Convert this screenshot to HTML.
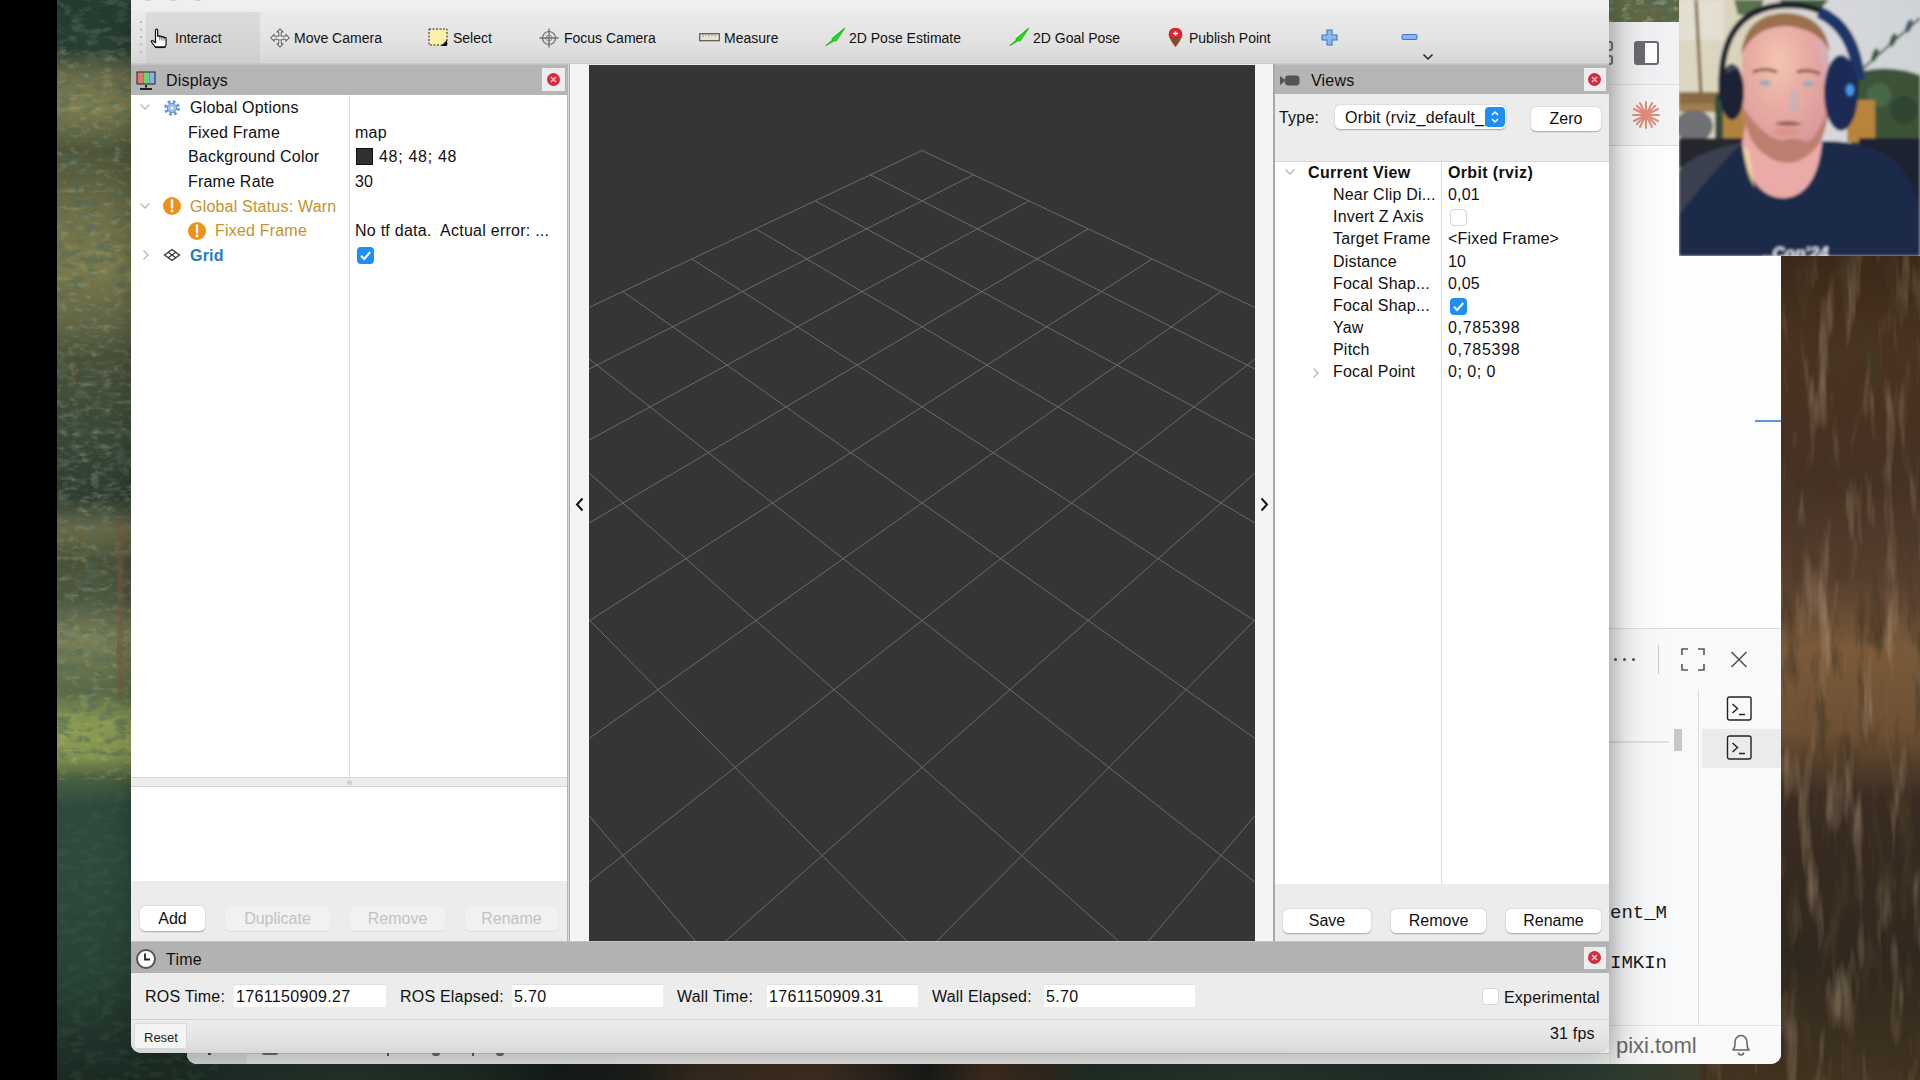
<!DOCTYPE html>
<html><head><meta charset="utf-8">
<style>
*{box-sizing:border-box}
html,body{margin:0;padding:0}
body{width:1920px;height:1080px;overflow:hidden;position:relative;background:#000;font-family:"Liberation Sans",sans-serif;color:#111}
.a{position:absolute}
.t{position:absolute;white-space:pre;line-height:1}
.f16{font-size:16px;letter-spacing:0.2px}
.f14{font-size:14px}
.btn{position:absolute;background:#fff;border-radius:5px;box-shadow:0 0.5px 1.5px rgba(0,0,0,.3);font-size:16px;text-align:center;color:#111}
.btn.dis{background:#f1f1f1;color:#c2c2c2;box-shadow:0 0.5px 1px rgba(0,0,0,.08)}
.hdr{position:absolute;background:#b5b5b5}
.cb{position:absolute;width:17px;height:17px;border-radius:4px;background:#1f8ff5}
.cbo{position:absolute;width:17px;height:17px;border-radius:4px;background:#fff;border:1px solid #d6d6d6}
.tf{position:absolute;background:#fff;border-top:1px solid #e0e0e0;font-size:16px;padding-left:1px;letter-spacing:.35px}
</style></head>
<body>
<!-- desktop background -->
<div id="forestL" class="a" style="left:57px;top:0;width:160px;height:1080px;overflow:hidden">
<svg width="160" height="1080" style="position:absolute;left:0;top:0">
<defs>
<linearGradient id="fg" x1="0" y1="0" x2="0" y2="1">
<stop offset="0" stop-color="#223a30"/><stop offset=".045" stop-color="#2a3e32"/><stop offset=".07" stop-color="#6a6c48"/><stop offset=".1" stop-color="#7e7e50"/><stop offset=".14" stop-color="#4e5438"/><stop offset=".2" stop-color="#707048"/><stop offset=".25" stop-color="#7a7a4c"/><stop offset=".3" stop-color="#626444"/><stop offset=".33" stop-color="#4a5038"/><stop offset=".4" stop-color="#3a4836"/><stop offset=".46" stop-color="#2e3c32"/><stop offset=".49" stop-color="#6a6a48"/><stop offset=".52" stop-color="#4a5038"/><stop offset=".555" stop-color="#4e5840"/><stop offset=".59" stop-color="#7a8058"/><stop offset=".64" stop-color="#5a6a44"/><stop offset=".67" stop-color="#8a9a52"/><stop offset=".7" stop-color="#86964e"/><stop offset=".72" stop-color="#4a6040"/><stop offset=".745" stop-color="#2e4a3c"/><stop offset=".8" stop-color="#2e4a3c"/><stop offset=".9" stop-color="#284236"/><stop offset=".97" stop-color="#1e3028"/><stop offset="1" stop-color="#1a2a22"/>
</linearGradient>
<filter id="fn" x="0" y="0" width="100%" height="100%"><feTurbulence type="fractalNoise" baseFrequency="0.07 0.14" numOctaves="3" seed="7"/><feColorMatrix type="matrix" values="0 0 0 0 0.08  0 0 0 0 0.14  0 0 0 0 0.1  0 0 0 -4 2.1"/></filter><filter id="fl" x="0" y="0" width="100%" height="100%"><feTurbulence type="fractalNoise" baseFrequency="0.09 0.16" numOctaves="3" seed="21"/><feColorMatrix type="matrix" values="0 0 0 0 0.55  0 0 0 0 0.56  0 0 0 0 0.34  0 0 0 3 -1.6"/></filter>
</defs>
<rect width="160" height="1080" fill="url(#fg)"/>
<rect width="160" height="760" filter="url(#fn)" opacity=".55"/><rect y="50" width="160" height="730" filter="url(#fl)" opacity=".3"/><rect y="790" width="160" height="290" filter="url(#fn)" opacity=".2"/>
<rect x="60" y="520" width="6" height="180" fill="#7a5a40" opacity=".55"/>
</svg>
</div>
<div id="forestB" class="a" style="left:217px;top:1052px;width:1703px;height:28px;background:linear-gradient(90deg,#1c2c24 0,#223028 140px,#1c2820 260px,#141a18 340px,#1a1c18 420px,#33281e 480px,#3c2c20 600px,#2a221c 660px,#161a16 710px,#3a2a1e 770px,#30261c 820px,#1e2c24 870px,#24322a 1040px,#1e2a24 1240px,#2a3a30 1390px,#3a3a2a 1480px,#6a4a30 1540px,#5a3e28 1703px)"></div>
<div id="bark" class="a" style="left:1700px;top:250px;width:220px;height:830px;overflow:hidden">
<svg width="220" height="830" style="position:absolute;left:0;top:0">
<defs>
<linearGradient id="bg1" x1="0" y1="0" x2="0" y2="1">
<stop offset="0" stop-color="#3a2818"/><stop offset=".12" stop-color="#4a3220"/><stop offset=".28" stop-color="#463022"/><stop offset=".4" stop-color="#584030"/><stop offset=".48" stop-color="#7a5a3a"/><stop offset=".58" stop-color="#6e5034"/><stop offset=".66" stop-color="#3a2c22"/><stop offset=".85" stop-color="#30281e"/><stop offset="1" stop-color="#40321f"/>
</linearGradient>
<filter id="bn" x="0" y="0" width="100%" height="100%"><feTurbulence type="fractalNoise" baseFrequency="0.07 0.015" numOctaves="4" seed="11"/><feColorMatrix type="matrix" values="0 0 0 0 0.06  0 0 0 0 0.04  0 0 0 0 0.02  0 0 0 -3.2 1.6"/></filter><filter id="bl2" x="0" y="0" width="100%" height="100%"><feTurbulence type="fractalNoise" baseFrequency="0.06 0.01" numOctaves="3" seed="5"/><feColorMatrix type="matrix" values="0 0 0 0 0.62  0 0 0 0 0.45  0 0 0 0 0.3  0 0 0 3.5 -1.9"/></filter>
</defs>
<rect width="220" height="830" fill="url(#bg1)"/>
<rect width="220" height="830" filter="url(#bn)" opacity=".8"/><rect width="220" height="830" filter="url(#bl2)" opacity=".35"/>
</svg>
</div>
<div id="forestTR" class="a" style="left:1600px;top:0;width:90px;height:40px;overflow:hidden"><svg width="90" height="40" style="position:absolute;left:0;top:0"><rect width="90" height="40" fill="#5e6644"/><rect width="90" height="40" filter="url(#fn)" opacity=".7"/><rect width="90" height="40" filter="url(#fl)" opacity=".5"/></svg></div>

<!-- webcam -->
<div id="cam" class="a" style="z-index:20;left:1679px;top:0;width:241px;height:256px;overflow:hidden;background:#d8d4c8">
<svg width="241" height="256" viewBox="0 0 241 256" style="position:absolute;left:0;top:0">
<defs><filter id="bl" x="-20%" y="-20%" width="140%" height="140%"><feGaussianBlur stdDeviation="1.4"/></filter>
<linearGradient id="wall" x1="0" y1="0" x2="1" y2="0"><stop offset="0" stop-color="#dcd8c4"/><stop offset=".3" stop-color="#d8d2bc"/><stop offset=".65" stop-color="#d6d8dc"/><stop offset="1" stop-color="#cfd3d6"/></linearGradient>
<radialGradient id="face" cx=".42" cy=".28" r=".7"><stop offset="0" stop-color="#f2c6b0"/><stop offset=".45" stop-color="#e8aca4"/><stop offset="1" stop-color="#d8989a"/></radialGradient>
</defs>
<g filter="url(#bl)">
<rect width="241" height="256" fill="url(#wall)"/>
<rect x="0" y="0" width="45" height="40" fill="#e8e6dc" opacity=".6"/>
<path d="M17 0 L22 95" stroke="#7a5a34" stroke-width="3"/>
<path d="M55 0h30l-6 15h-20z" fill="#5a7050"/>
<path d="M100 0h50l-8 8h-36z" fill="#3e5a3e"/>
<path d="M180 72 L241 18" stroke="#3a4a38" stroke-width="2"/>
<ellipse cx="196" cy="55" rx="3" ry="7" fill="#3a5a3a" transform="rotate(20 196 55)"/>
<ellipse cx="214" cy="40" rx="3" ry="7" fill="#3a5a3a" transform="rotate(20 214 40)"/>
<ellipse cx="230" cy="26" rx="3" ry="7" fill="#3a5a6a" transform="rotate(20 230 26)"/>
<rect x="0" y="92" width="46" height="14" fill="#8a6a40"/>
<rect x="0" y="104" width="44" height="8" fill="#a08050"/>
<ellipse cx="15" cy="126" rx="19" ry="16" fill="#707074"/>
<rect x="36" y="95" width="9" height="45" fill="#2e5038"/>
<rect x="44" y="105" width="32" height="36" fill="#b08440"/>
<rect x="0" y="138" width="70" height="30" fill="#26282e"/>
<path d="M170 75 Q205 62 241 75 L241 150 L172 150z" fill="#3c5238"/>
<circle cx="200" cy="95" r="12" fill="#4a6848"/><circle cx="225" cy="110" r="14" fill="#2e4432"/>
<rect x="168" y="100" width="28" height="42" fill="#b8843a"/>
<rect x="180" y="138" width="61" height="75" fill="#1c2232"/>
<!-- shirt -->
<path d="M0 170 Q20 150 63 143 Q70 196 104 198 Q138 196 143 141 Q185 140 215 160 Q235 180 241 210 L241 256 L0 256z" fill="#1e2a48"/>
<path d="M0 170 Q20 150 63 143 Q45 160 20 190 L0 215z" fill="#3a3f50"/>
<!-- neck -->
<path d="M68 118 L142 118 L143 141 Q138 196 104 198 Q70 196 63 143z" fill="#eaaaa8"/>
<path d="M64 145 Q66 175 76 188 L70 150z" fill="#f0e0a0" opacity=".7"/>
<!-- headphone band -->
<path d="M43 100 Q36 6 110 5 Q182 6 176 95" fill="none" stroke="#1a1e2a" stroke-width="6"/>
<path d="M140 12 Q176 28 180 80" fill="none" stroke="#1e3468" stroke-width="12"/>
<!-- face -->
<path d="M63 62 Q63 24 106 24 Q150 24 150 62 L150 105 Q148 138 132 152 Q118 162 108 162 Q96 162 84 152 Q66 138 64 105z" fill="url(#face)"/>
<path d="M62 55 Q66 14 106 13 Q146 14 151 52 Q140 28 106 26 Q75 27 62 55z" fill="#9c7050"/>
<path d="M65 108 Q66 140 84 153 Q96 163 108 163 Q120 163 132 153 Q148 140 149 108 Q140 136 128 142 Q116 136 104 140 Q86 140 65 108z" fill="#b87c6c" opacity=".9"/>
<path d="M95 124 Q108 118 124 124 Q110 128 95 124z" fill="#9a6050"/>
<ellipse cx="108" cy="132" rx="14" ry="4" fill="#d89088" opacity=".8"/>
<ellipse cx="86" cy="83" rx="6" ry="3" fill="#9aacb4"/>
<ellipse cx="129" cy="84" rx="6" ry="3" fill="#9aacb4"/>
<path d="M74 72 Q86 67 98 72M118 72 Q129 68 141 74" fill="none" stroke="#8a5a48" stroke-width="3"/>
<path d="M114 90 L115 111" stroke="#a8b8d8" stroke-width="6" opacity=".55"/>
<path d="M138 40 Q150 60 150 100" stroke="#c8c8e8" stroke-width="8" opacity=".3" fill="none"/>
<!-- ear cups -->
<ellipse cx="53" cy="92" rx="12" ry="28" fill="#1e2434"/>
<ellipse cx="162" cy="93" rx="17" ry="38" fill="#1a2a56"/>
<ellipse cx="171" cy="90" rx="4" ry="6" fill="#4a98e8"/>
<path d="M48 72 Q52 66 60 68" stroke="#5a6070" stroke-width="2" fill="none"/>
<text x="84" y="259" font-family="Liberation Sans" font-size="17" font-weight="700" fill="#e4e8f4" font-style="italic">..Con'24</text>
</g>
</svg>
</div>

<!-- VS Code window behind -->
<div id="vsc" class="a" style="left:187px;top:22px;width:1594px;height:1042px;border-radius:10px;overflow:hidden;background:#f8f8f9">
<div class="a" style="left:-187px;top:-22px;width:1920px;height:1080px">
<div class="a" style="left:187px;top:22px;width:1594px;height:63px;background:#f2f2f4;border-bottom:1px solid #dcdcde"></div>
<div class="a" style="left:187px;top:86px;width:1594px;height:60px;background:#f4f4f6;border-bottom:1px solid #dcdcde"></div>
<div class="a" style="left:187px;top:146px;width:1594px;height:482px;background:#fefefe"></div>
<div class="a" style="left:187px;top:628px;width:1594px;height:397px;background:#f8f9fb;border-top:1px solid #dedee0"></div>
<div class="a" style="left:187px;top:1025px;width:1594px;height:39px;background:#fafafa;border-top:1px solid #e2e2e4"></div>
<!-- icons -->
<div class="a" style="left:1605px;top:41px;width:8px;height:10px;border:2px solid #777;border-left:none;border-radius:0 3px 3px 0"></div>
<div class="a" style="left:1605px;top:55px;width:8px;height:10px;border:2px solid #777;border-left:none;border-radius:0 3px 3px 0"></div>
<div class="a" style="left:1634px;top:41px;width:25px;height:24px;border:2px solid #6a6a70;border-radius:3px;background:linear-gradient(90deg,#6a6a70 45%,#fff 45%)"></div>
<svg class="a" style="left:1630px;top:99px" width="32" height="32" viewBox="0 0 32 32"><g stroke="#e08e7c" stroke-width="2" stroke-linecap="round"><path d="M16 3v26M3 16h26M6.8 6.8l18.4 18.4M25.2 6.8L6.8 25.2M10 4l12 24M22 4L10 28M4 10l24 12M4 22l24-12"/></g></svg>
<div class="a" style="left:1755px;top:420px;width:26px;height:2px;background:#5a98e0"></div>
<!-- panel toolbar -->
<div class="a" style="left:1614px;top:658px;width:3px;height:3px;border-radius:50%;background:#555;box-shadow:9px 0 #555,18px 0 #555"></div>
<div class="a" style="left:1658px;top:645px;width:1px;height:29px;background:#c8c8c8"></div>
<svg class="a" style="left:1681px;top:648px" width="24" height="23" viewBox="0 0 24 23"><path d="M1 7V1h6M17 1h6v6M23 16v6h-6M7 22H1v-6" fill="none" stroke="#555" stroke-width="1.6"/></svg>
<svg class="a" style="left:1730px;top:651px" width="18" height="17" viewBox="0 0 18 17"><path d="M1.5 1l15 15M16.5 1l-15 15" stroke="#555" stroke-width="1.6"/></svg>
<div class="a" style="left:1698px;top:690px;width:1px;height:335px;background:#dcdcde"></div>
<div class="a" style="left:1702px;top:729px;width:79px;height:39px;background:#ebebed"></div>
<svg class="a" style="left:1726px;top:696px" width="27" height="26" viewBox="0 0 27 26"><rect x="1.5" y="1" width="23.5" height="23" rx="2" fill="none" stroke="#222" stroke-width="1.4"/><path d="M6.5 8l5 4.5-5 4.5M13 18.5h6" fill="none" stroke="#222" stroke-width="1.4"/></svg>
<svg class="a" style="left:1726px;top:735px" width="27" height="26" viewBox="0 0 27 26"><rect x="1.5" y="1" width="23.5" height="23" rx="2" fill="none" stroke="#222" stroke-width="1.4"/><path d="M6.5 8l5 4.5-5 4.5M13 18.5h6" fill="none" stroke="#222" stroke-width="1.4"/></svg>
<div class="a" style="left:1674px;top:729px;width:8px;height:22px;background:#c8c8c8"></div>
<div class="a" style="left:1609px;top:741px;width:60px;height:2px;background:#e2e2e4"></div>
<div class="t" style="left:1610px;top:904px;font-family:'Liberation Mono',monospace;font-size:19px;color:#1a1a1a">ent_M</div>
<div class="t" style="left:1610px;top:954px;font-family:'Liberation Mono',monospace;font-size:19px;color:#1a1a1a">IMKIn</div>
<div class="t" style="left:1616px;top:1035px;font-size:22px;color:#6a6a6a">pixi.toml</div>
<svg class="a" style="left:1730px;top:1032px" width="22" height="25" viewBox="0 0 22 25"><path d="M3 18c1.5-1.5 2-3 2-6V10c0-3.5 2.5-6.5 6-6.5s6 3 6 6.5v2c0 3 .5 4.5 2 6z" fill="none" stroke="#666" stroke-width="1.6" stroke-linejoin="round"/><path d="M8.5 20.5a2.5 2.5 0 005 0" fill="none" stroke="#666" stroke-width="1.6"/></svg>
<div class="a" style="left:187px;top:1053px;width:1422px;height:11px;background:linear-gradient(90deg,#d0d0d0 0,#d0d0d0 59px,#dcdcdc 60px,#dedede 800px,#e2e2e2 1422px);border-top:1px solid #c6c6c6"></div>
<div class="a" style="left:208px;top:1053px;width:3px;height:2px;background:#444"></div>
<div class="a" style="left:262px;top:1053px;width:16px;height:2px;background:#666;border-radius:0 0 4px 4px"></div>
<div class="a" style="left:387px;top:1053px;width:2px;height:3px;background:#555"></div>
<div class="a" style="left:432px;top:1053px;width:8px;height:3px;background:#666;border-radius:0 0 4px 4px"></div>
<div class="a" style="left:472px;top:1053px;width:2px;height:3px;background:#555"></div>
<div class="a" style="left:496px;top:1053px;width:8px;height:3px;background:#666;border-radius:0 0 4px 4px"></div>
<div class="a" style="left:1609px;top:22px;width:60px;height:1042px;background:linear-gradient(90deg,rgba(0,0,0,.14),rgba(0,0,0,.06) 15px,rgba(0,0,0,.02) 35px,rgba(0,0,0,0))"></div>
</div>
</div>

<!-- RViz window -->
<div id="rviz" class="a" style="left:131px;top:0;width:1478px;height:1053px;border-radius:0 0 10px 10px;overflow:hidden;background:#ececec;box-shadow:0 0 30px rgba(0,0,0,.25)">
<div class="a" style="left:-131px;top:0;width:1920px;height:1080px">
<!-- title strip -->
<div class="a" style="left:131px;top:0;width:1478px;height:11px;background:#efefef"></div>
<div class="a" style="left:142px;top:-11px;width:12px;height:12px;border-radius:50%;background:#c9c9c9;box-shadow:25px 0 #cfcdbf,50px 0 #c9c9c9"></div>
<!-- toolbar -->
<div class="a" style="left:131px;top:11px;width:1478px;height:53px;background:linear-gradient(180deg,#ebebeb,#e2e2e2 60%,#d7d7d7);border-bottom:1px solid #c8c8c8"></div>
<!-- handle dots -->
<div class="a" style="left:140px;top:21px;width:2px;height:2px;background:#b8b8b8;box-shadow:0 7.5px #b8b8b8,0 15px #b8b8b8,0 22.5px #b8b8b8,0 30px #b8b8b8"></div>
<!-- interact selected -->
<div class="a" style="left:146px;top:12px;width:114px;height:51px;background:linear-gradient(180deg,#dcdcdc,#cfcfcf);border-radius:3px 3px 0 0"></div>
<svg class="a" style="left:150px;top:27px" width="22" height="22" viewBox="0 0 22 22"><path d="M5.5 3c0-1.3 2.2-1.3 2.2 0v6.5c0-1.2 2.1-1.2 2.1 0v.5c0-1.2 2.1-1.2 2.1 0v.6c0-1.2 2.1-1.2 2.1 0v.6c0-1.2 2.1-1.2 2.1 0v6c0 1.2-.6 2.3-1.2 2.8H5.2L1.6 15.2c-.7-1 .3-2.2 1.3-1.5l2.6 2z" fill="#fff" stroke="#111" stroke-width="1.2" stroke-linejoin="round"/><path d="M9.8 10v3.5M11.9 10.6v3M14 11.2v2.6" stroke="#444" stroke-width=".7"/><rect x="5.2" y="19.5" width="10.3" height="1.6" fill="#111"/></svg>
<div class="t f14" style="left:175px;top:31px">Interact</div>
<svg class="a" style="left:269px;top:28px" width="22" height="20" viewBox="0 0 22 20"><path d="M11 .8l3 3.2h-1.8v4.3h4.6V6.4l3.4 3.4-3.4 3.4v-1.9h-4.6v4.5H14l-3 3.2-3-3.2h1.8v-4.5H5.2v1.9L1.8 9.8l3.4-3.4v1.9h4.6V4H8z" fill="#f6f6f6" stroke="#6a6a6a" stroke-width="1.1" stroke-linejoin="round"/><ellipse cx="11" cy="9.8" rx="4" ry="2.2" fill="none" stroke="#8a8a8a" stroke-width=".9"/></svg>
<div class="t f14" style="left:294px;top:31px">Move Camera</div>
<svg class="a" style="left:428px;top:28px" width="21" height="19" viewBox="0 0 21 19"><rect x="1" y="1" width="18" height="16" fill="#fbf0a8" stroke="#222" stroke-width="1" stroke-dasharray="2 1.5"/><path d="M19 12v6h-6z" fill="#111"/></svg>
<div class="t f14" style="left:453px;top:31px">Select</div>
<svg class="a" style="left:538px;top:27px" width="22" height="22" viewBox="0 0 22 22"><circle cx="11" cy="11" r="6.5" fill="#e2e2e2" stroke="#6e6e6e" stroke-width="1.2"/><path d="M11 1.5v19M1.5 11h19" stroke="#6e6e6e" stroke-width="1.3"/><circle cx="11" cy="11" r="3" fill="none" stroke="#8a8a8a" stroke-width="1"/></svg>
<div class="t f14" style="left:564px;top:31px">Focus Camera</div>
<svg class="a" style="left:699px;top:33px" width="22" height="9" viewBox="0 0 22 9"><rect x="0.7" y="0.7" width="19.6" height="7" fill="#e9e3cf" stroke="#555" stroke-width="1.2"/><path d="M4 1v3M7 1v2M10 1v3M13 1v2M16 1v3" stroke="#888" stroke-width=".8"/></svg>
<div class="t f14" style="left:724px;top:31px">Measure</div>
<svg class="a" style="left:824px;top:27px" width="22" height="20" viewBox="0 0 22 20"><path d="M2 18.5L9 13l-1-1 12.5-10.5L12 14l-1-1z" fill="#22dd22" stroke="#1cc41c" stroke-width="1.2" stroke-linejoin="round"/></svg>
<div class="t f14" style="left:849px;top:31px">2D Pose Estimate</div>
<svg class="a" style="left:1008px;top:27px" width="22" height="20" viewBox="0 0 22 20"><path d="M2 18.5L9 13l-1-1 12.5-10.5L12 14l-1-1z" fill="#22dd22" stroke="#1cc41c" stroke-width="1.2" stroke-linejoin="round"/></svg>
<div class="t f14" style="left:1033px;top:31px">2D Goal Pose</div>
<svg class="a" style="left:1167px;top:27px" width="17" height="21" viewBox="0 0 17 21"><path d="M8.5 1C4.5 1 1.8 3.8 1.8 7.5c0 4.5 6.7 12.5 6.7 12.5s6.7-8 6.7-12.5C15.2 3.8 12.5 1 8.5 1z" fill="#8a4a2a"/><path d="M8.5 1C4.5 1 1.8 3.8 1.8 7.2c0 1.5 .5 2.8 1 3.6h11.4c.5-.8 1-2.1 1-3.6C15.2 3.8 12.5 1 8.5 1z" fill="#d8252f"/><path d="M8.5 4v5M6 6.5h5" stroke="#fff" stroke-width="1.4"/></svg>
<div class="t f14" style="left:1189px;top:31px">Publish Point</div>
<svg class="a" style="left:1321px;top:29px" width="17" height="17" viewBox="0 0 17 17"><path d="M6 1h5v5h5v5h-5v5H6v-5H1V6h5z" fill="#8ab8ee" stroke="#3c78c8" stroke-width="1.1"/></svg>
<svg class="a" style="left:1401px;top:33px" width="17" height="8" viewBox="0 0 17 8"><rect x="1" y="1.5" width="15" height="5" rx="1.5" fill="#8ab8ee" stroke="#3c78c8" stroke-width="1.1"/></svg>
<svg class="a" style="left:1422px;top:53px" width="12" height="8" viewBox="0 0 12 8"><path d="M1.5 1.5l4.5 4.5 4.5-4.5" fill="none" stroke="#222" stroke-width="1.5"/></svg>

<!-- Displays dock -->
<div class="hdr" style="left:131px;top:64px;width:437px;height:31px;border-top:1px solid #c2c2c2"></div>
<svg class="a" style="left:135px;top:70px" width="22" height="22" viewBox="0 0 22 22"><rect x="1.5" y="1.5" width="19" height="13" fill="#222"/><rect x="2.5" y="2.5" width="6" height="11" fill="#e07a70"/><rect x="8.5" y="2.5" width="6" height="11" fill="#6cd46c"/><rect x="14.5" y="2.5" width="5" height="11" fill="#8ab0e8"/><path d="M10 15h2v2.5h-2z" fill="#222"/><rect x="5" y="18" width="12" height="2" fill="#222"/></svg>
<div class="t f16" style="left:166px;top:72.5px">Displays</div>
<div class="a" style="left:542px;top:68px;width:23px;height:23px;background:#ededed"></div>
<svg class="a" style="left:546px;top:72px" width="15" height="15" viewBox="0 0 15 15"><circle cx="7.5" cy="7.5" r="6.5" fill="#d42a3c"/><path d="M5 5l5 5M10 5l-5 5" stroke="#f4c4c8" stroke-width="1.6"/></svg>
<div class="a" style="left:567px;top:64px;width:1px;height:877px;background:#b4b4b4"></div><div class="a" style="left:568px;top:64px;width:1px;height:877px;background:#dadada"></div><div class="a" style="left:569px;top:64px;width:1.5px;height:877px;background:#a8a8a8"></div>
<!-- tree -->
<div class="a" style="left:131px;top:95px;width:436px;height:682px;background:#fff"></div>
<div class="a" style="left:349px;top:95px;width:1px;height:682px;background:#dedede"></div>
<svg class="a" style="left:139px;top:102px" width="12" height="10" viewBox="0 0 12 10"><path d="M1.5 2.5l4.5 4.5 4.5-4.5" fill="none" stroke="#b8b8b8" stroke-width="1.3"/></svg>
<svg class="a" style="left:163px;top:99px" width="18" height="18" viewBox="0 0 18 18"><circle cx="9" cy="9" r="6.2" fill="none" stroke="#6e98d4" stroke-width="3.4" stroke-dasharray="2.6 2.27"/><circle cx="9" cy="9" r="4.6" fill="#9cc0ec" stroke="#5a86c4" stroke-width=".8"/><circle cx="9" cy="9" r="1.6" fill="#eef4fc"/></svg>
<div class="t f16" style="left:190px;top:100.2px">Global Options</div>
<div class="t f16" style="left:188px;top:124.7px">Fixed Frame</div>
<div class="t f16" style="left:355px;top:124.7px">map</div>
<div class="t f16" style="left:188px;top:149.2px">Background Color</div>
<div class="a" style="left:356px;top:148px;width:17px;height:17px;background:#303030;border:1px solid #111"></div>
<div class="t f16" style="left:379px;top:149.2px;letter-spacing:.7px">48; 48; 48</div>
<div class="t f16" style="left:188px;top:173.7px">Frame Rate</div>
<div class="t f16" style="left:355px;top:173.7px">30</div>
<svg class="a" style="left:139px;top:201px" width="12" height="10" viewBox="0 0 12 10"><path d="M1.5 2.5l4.5 4.5 4.5-4.5" fill="none" stroke="#b8b8b8" stroke-width="1.3"/></svg>
<svg class="a" style="left:162px;top:196px" width="20" height="20" viewBox="0 0 20 20"><circle cx="10" cy="10" r="9" fill="#f0901c"/><path d="M10 4.5v7" stroke="#fff" stroke-width="2.4" stroke-linecap="round"/><circle cx="10" cy="15" r="1.4" fill="#fff"/></svg>
<div class="t f16" style="left:190px;top:198.7px;color:#c4922c">Global Status: Warn</div>
<svg class="a" style="left:187px;top:221px" width="20" height="20" viewBox="0 0 20 20"><circle cx="10" cy="10" r="9" fill="#f0901c"/><path d="M10 4.5v7" stroke="#fff" stroke-width="2.4" stroke-linecap="round"/><circle cx="10" cy="15" r="1.4" fill="#fff"/></svg>
<div class="t f16" style="left:215px;top:223.2px;color:#c4922c">Fixed Frame</div>
<div class="t f16" style="left:355px;top:223.2px;letter-spacing:.25px">No tf data.  Actual error: ...</div>
<svg class="a" style="left:141px;top:249px" width="10" height="12" viewBox="0 0 10 12"><path d="M2.5 1.5l4.5 4.5-4.5 4.5" fill="none" stroke="#b8b8b8" stroke-width="1.3"/></svg>
<svg class="a" style="left:163px;top:248px" width="18" height="14" viewBox="0 0 18 14"><path d="M9 1.5L16.5 7 9 12.5 1.5 7z" fill="none" stroke="#333" stroke-width="1.3"/><path d="M5.2 4.2L12.8 9.8M12.8 4.2L5.2 9.8" stroke="#333" stroke-width="1.2"/></svg>
<div class="t f16" style="left:190px;top:247.7px;color:#1f7cc8;font-weight:700">Grid</div>
<div class="cb" style="left:357px;top:247px"></div>
<svg class="a" style="left:357px;top:247px" width="17" height="17" viewBox="0 0 17 17"><path d="M4 8.8l3.2 3.2 6-7" fill="none" stroke="#fff" stroke-width="2"/></svg>
<!-- splitter -->
<div class="a" style="left:131px;top:777px;width:436px;height:10px;background:#ededed;border-top:1px solid #d4d4d4;border-bottom:1px solid #d4d4d4"></div>
<div class="a" style="left:347px;top:780px;width:5px;height:5px;border-radius:50%;background:#d0d0d0"></div>
<div class="a" style="left:131px;top:787px;width:436px;height:94px;background:#fff"></div>
<!-- buttons -->
<div class="btn" style="left:140px;top:906px;width:65px;height:25px;line-height:25px">Add</div>
<div class="btn dis" style="left:225px;top:906px;width:105px;height:25px;line-height:25px">Duplicate</div>
<div class="btn dis" style="left:350px;top:906px;width:95px;height:25px;line-height:25px">Remove</div>
<div class="btn dis" style="left:465px;top:906px;width:93px;height:25px;line-height:25px">Rename</div>
<!-- left splitter -->
<div class="a" style="left:570px;top:64px;width:19px;height:877px;background:#f4f4f2"></div>
<svg class="a" style="left:575px;top:497px" width="10" height="15" viewBox="0 0 10 15"><path d="M7.5 1.5l-5.5 6 5.5 6" fill="none" stroke="#111" stroke-width="2"/></svg>

<!-- right splitter -->
<div class="a" style="left:1255px;top:64px;width:20px;height:877px;background:#f4f4f2"></div>
<div class="a" style="left:1273px;top:64px;width:1.5px;height:877px;background:#a8a8a8"></div>
<svg class="a" style="left:1259px;top:497px" width="10" height="15" viewBox="0 0 10 15"><path d="M2.5 1.5l5.5 6-5.5 6" fill="none" stroke="#111" stroke-width="2"/></svg>
<!-- Views dock -->
<div class="hdr" style="left:1275px;top:64px;width:334px;height:30px;border-top:1px solid #c2c2c2"></div>
<svg class="a" style="left:1279px;top:74px" width="22" height="13" viewBox="0 0 22 13"><path d="M1 2l6 4.5L1 11z" fill="#555"/><rect x="6" y="1.5" width="14.5" height="10" rx="3" fill="#555"/></svg>
<div class="t f16" style="left:1311px;top:72.5px">Views</div>
<div class="a" style="left:1584px;top:68px;width:22px;height:23px;background:#ededed"></div>
<svg class="a" style="left:1587px;top:72px" width="15" height="15" viewBox="0 0 15 15"><circle cx="7.5" cy="7.5" r="6.5" fill="#d42a3c"/><path d="M5 5l5 5M10 5l-5 5" stroke="#f4c4c8" stroke-width="1.6"/></svg>
<div class="t f16" style="left:1279px;top:110px">Type:</div>
<div class="a" style="left:1335px;top:105px;width:171px;height:24px;background:#fff;border-radius:5px;box-shadow:0 0.5px 1.5px rgba(0,0,0,.3);overflow:hidden">
<div class="t f16" style="left:10px;top:4.5px">Orbit (rviz_default_plugins)</div>
<div class="a" style="left:150px;top:2px;width:20px;height:20px;border-radius:4px;background:#1f8ff5"></div>
<svg class="a" style="left:154px;top:4px" width="12" height="16" viewBox="0 0 12 16"><path d="M3 6l3-3 3 3M3 10l3 3 3-3" fill="none" stroke="#fff" stroke-width="1.5"/></svg>
</div>
<div class="btn" style="left:1531px;top:107px;width:70px;height:24px;line-height:24px">Zero</div>
<!-- views tree -->
<div class="a" style="left:1275px;top:161px;width:334px;height:723px;background:#fff;border-top:1px solid #d8d8d8"></div>
<div class="a" style="left:1441px;top:162px;width:1px;height:722px;background:#dedede"></div>
<svg class="a" style="left:1284px;top:167px" width="12" height="10" viewBox="0 0 12 10"><path d="M1.5 2.5l4.5 4.5 4.5-4.5" fill="none" stroke="#b8b8b8" stroke-width="1.3"/></svg>
<div class="t f16" style="left:1308px;top:165.0px;font-weight:700;letter-spacing:.35px">Current View</div>
<div class="t f16" style="left:1448px;top:165.0px;font-weight:700;letter-spacing:.35px">Orbit (rviz)</div>
<div class="t f16" style="left:1333px;top:187.1px">Near Clip Di...</div>
<div class="t f16" style="left:1448px;top:187.1px">0,01</div>
<div class="t f16" style="left:1333px;top:209.2px">Invert Z Axis</div>
<div class="cbo" style="left:1450px;top:209px"></div>
<div class="t f16" style="left:1333px;top:231.3px">Target Frame</div>
<div class="t f16" style="left:1448px;top:231.3px">&lt;Fixed Frame&gt;</div>
<div class="t f16" style="left:1333px;top:253.5px">Distance</div>
<div class="t f16" style="left:1448px;top:253.5px">10</div>
<div class="t f16" style="left:1333px;top:275.6px">Focal Shap...</div>
<div class="t f16" style="left:1448px;top:275.6px">0,05</div>
<div class="t f16" style="left:1333px;top:297.7px">Focal Shap...</div>
<div class="cb" style="left:1450px;top:298px"></div>
<svg class="a" style="left:1450px;top:298px" width="17" height="17" viewBox="0 0 17 17"><path d="M4 8.8l3.2 3.2 6-7" fill="none" stroke="#fff" stroke-width="2"/></svg>
<div class="t f16" style="left:1333px;top:319.9px">Yaw</div>
<div class="t f16" style="left:1448px;top:319.9px;letter-spacing:.7px">0,785398</div>
<div class="t f16" style="left:1333px;top:342.0px">Pitch</div>
<div class="t f16" style="left:1448px;top:342.0px;letter-spacing:.7px">0,785398</div>
<svg class="a" style="left:1311px;top:367px" width="10" height="12" viewBox="0 0 10 12"><path d="M2.5 1.5l4.5 4.5-4.5 4.5" fill="none" stroke="#b8b8b8" stroke-width="1.3"/></svg>
<div class="t f16" style="left:1333px;top:364.1px">Focal Point</div>
<div class="t f16" style="left:1448px;top:364.1px;letter-spacing:.5px">0; 0; 0</div>
<!-- views buttons -->
<div class="btn" style="left:1283px;top:909px;width:88px;height:24px;line-height:24px">Save</div>
<div class="btn" style="left:1391px;top:909px;width:95px;height:24px;line-height:24px">Remove</div>
<div class="btn" style="left:1506px;top:909px;width:95px;height:24px;line-height:24px">Rename</div>

<!-- Time dock -->
<div class="a" style="left:131px;top:941px;width:1478px;height:32px;background:#b2b2b2;border-top:1px solid #c4c4c4"></div>
<svg class="a" style="left:135px;top:948px" width="22" height="22" viewBox="0 0 22 22"><circle cx="11" cy="11" r="9" fill="#fff" stroke="#555" stroke-width="2"/><path d="M10 5.5v6h5" fill="none" stroke="#222" stroke-width="1.8"/></svg>
<div class="t f16" style="left:166px;top:951.5px">Time</div>
<div class="a" style="left:1584px;top:947px;width:22px;height:22px;background:#ededed"></div>
<svg class="a" style="left:1587px;top:950px" width="15" height="15" viewBox="0 0 15 15"><circle cx="7.5" cy="7.5" r="6.5" fill="#d42a3c"/><path d="M5 5l5 5M10 5l-5 5" stroke="#f4c4c8" stroke-width="1.6"/></svg>
<div class="t f16" style="left:145px;top:988.5px">ROS Time:</div>
<div class="tf" style="left:234px;top:984px;width:152px;height:23px"><span class="t" style="left:2px;top:3.5px">1761150909.27</span></div>
<div class="t f16" style="left:400px;top:988.5px">ROS Elapsed:</div>
<div class="tf" style="left:512px;top:984px;width:151px;height:23px"><span class="t" style="left:2px;top:3.5px">5.70</span></div>
<div class="t f16" style="left:677px;top:988.5px">Wall Time:</div>
<div class="tf" style="left:767px;top:984px;width:151px;height:23px"><span class="t" style="left:2px;top:3.5px">1761150909.31</span></div>
<div class="t f16" style="left:932px;top:988.5px">Wall Elapsed:</div>
<div class="tf" style="left:1044px;top:984px;width:151px;height:23px"><span class="t" style="left:2px;top:3.5px">5.70</span></div>
<div class="cbo" style="left:1482px;top:988px"></div>
<div class="t f16" style="left:1504px;top:989.5px">Experimental</div>
<!-- status bar -->
<div class="a" style="left:131px;top:1019px;width:1478px;height:34px;background:linear-gradient(180deg,#ececec,#e2e2e2 70%,#d6d6d6);border-top:1px solid #d2d2d2"></div>
<div class="a" style="left:134px;top:1023px;width:53px;height:26px;background:#f4f4f4;border:1px solid #d8d8d8;border-radius:2px"></div>
<div class="t" style="left:144px;top:1031px;font-size:13px;color:#222">Reset</div>
<div class="t f16" style="left:1550px;top:1026px">31 fps</div>

<!-- viewport -->
<div id="vp" class="a" style="left:589px;top:65px;width:666px;height:876px;background:#353533;overflow:hidden">
<svg width="666" height="876" style="position:absolute;left:0;top:0"><path d="M333.0 85.5L1080.7 438.0M333.0 85.5L-414.7 438.0M281.4 109.8L1041.4 493.7M384.6 109.8L-375.4 493.7M226.2 135.9L997.6 555.5M439.8 135.9L-331.6 555.5M166.8 163.9L948.8 624.6M499.2 163.9L-282.8 624.6M102.9 194.0L893.8 702.4M563.1 194.0L-227.8 702.4M33.9 226.5L831.5 790.5M632.1 226.5L-165.5 790.5M-40.9 261.8L760.3 891.2M706.9 261.8L-94.3 891.2M-122.1 300.1L678.1 1007.4M788.1 300.1L-12.1 1007.4M-210.8 341.9L582.2 1143.0M876.8 341.9L83.8 1143.0M-307.9 387.6L468.9 1303.2M973.9 387.6L197.1 1303.2M-414.7 438.0L333.0 1495.4M1080.7 438.0L333.0 1495.4" stroke="#727270" stroke-width="0.9" fill="none"/></svg>
</div>

</div>
</div>
</body></html>
